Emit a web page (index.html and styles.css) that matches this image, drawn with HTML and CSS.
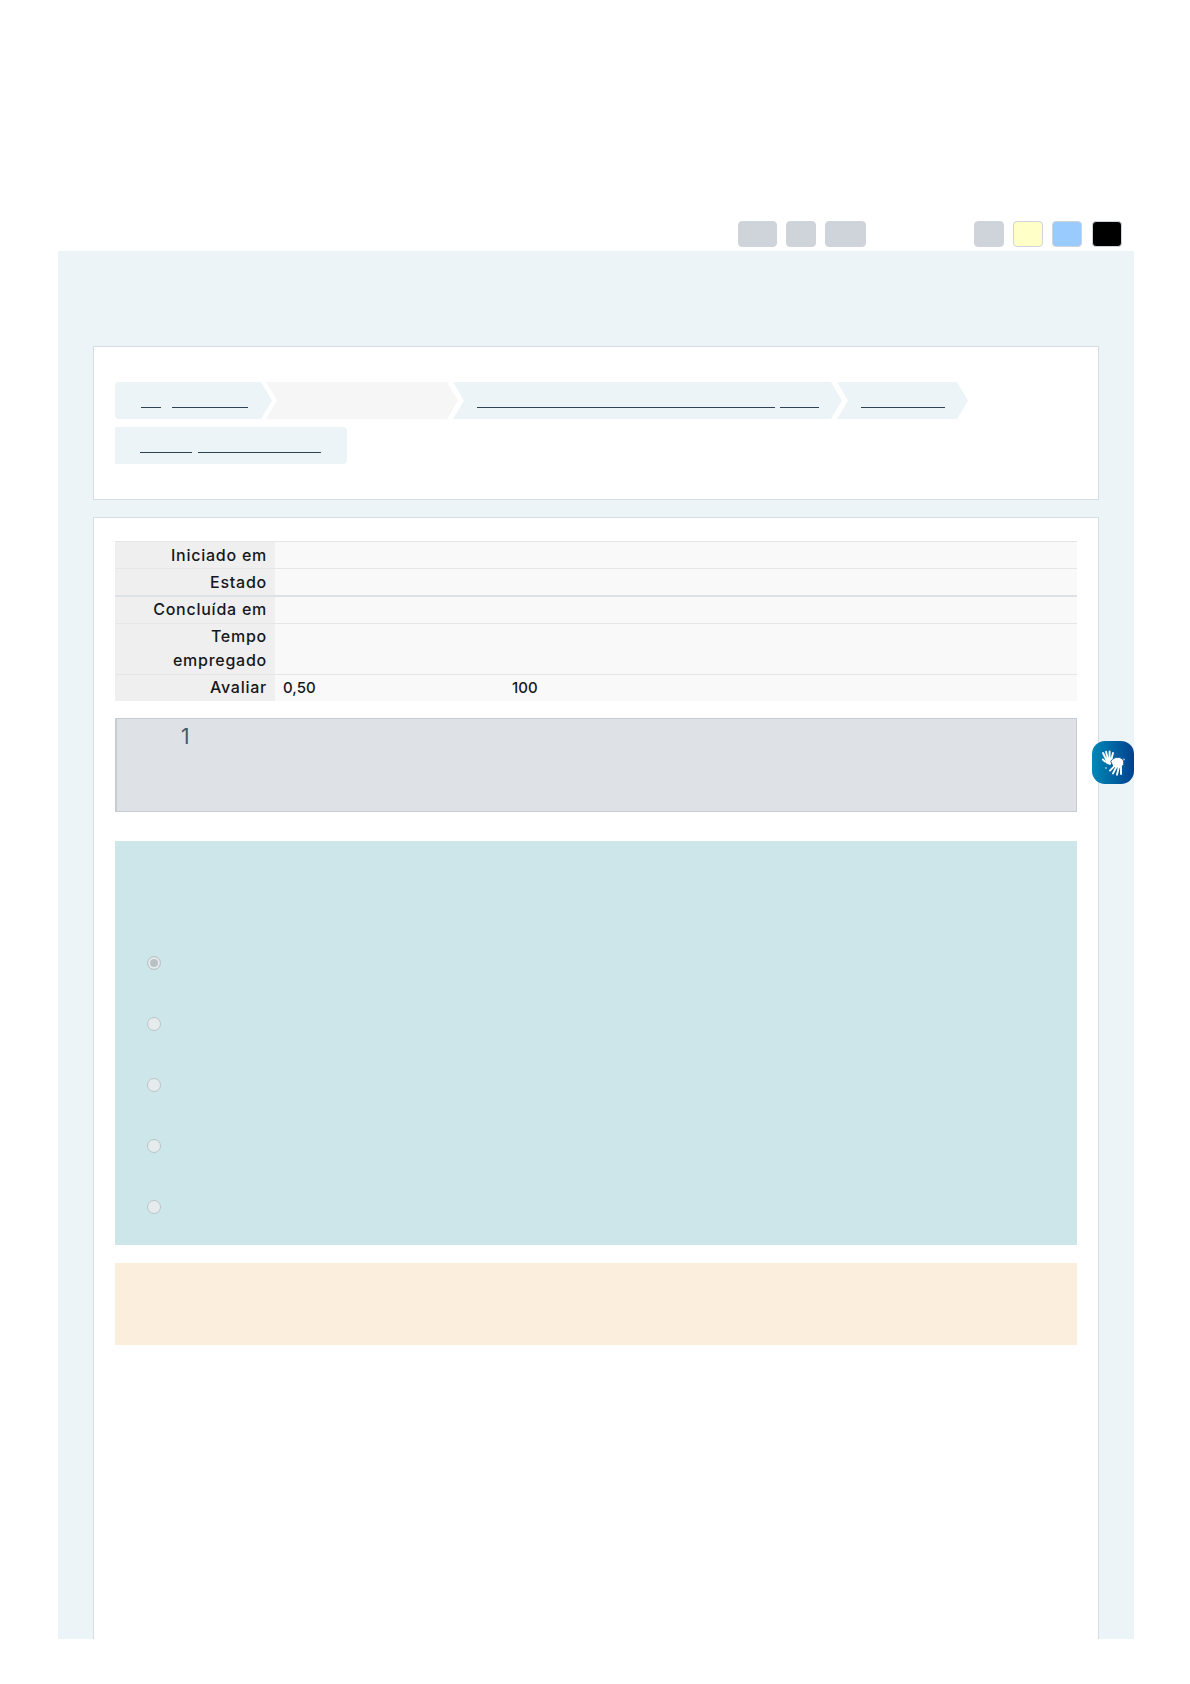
FILE: index.html
```html
<!DOCTYPE html>
<html lang="pt-BR">
<head>
<meta charset="utf-8">
<title>Revisão da tentativa</title>
<link rel="stylesheet" href="styles.css">
</head>
<body>
<header class="topbar">
  <div class="tools tools-size">
    <span class="tool tool-a"></span>
    <span class="tool tool-b"></span>
    <span class="tool tool-c"></span>
  </div>
  <div class="tools tools-contrast">
    <span class="tool swatch swatch-grey"></span>
    <span class="tool swatch swatch-yellow"></span>
    <span class="tool swatch swatch-blue"></span>
    <span class="tool swatch swatch-black"></span>
  </div>
</header>
<main class="page">
  <nav class="card crumbs">
    <div class="crumb-row">
      <div class="crumb crumb-1"><i class="u u1"></i><i class="u u2"></i></div>
      <div class="crumb crumb-2"></div>
      <div class="crumb crumb-3"><i class="u u3"></i><i class="u u4"></i></div>
      <div class="crumb crumb-4"><i class="u u5"></i></div>
    </div>
    <div class="crumb-row">
      <div class="crumb crumb-5"><i class="u u6"></i><i class="u u7"></i></div>
    </div>
  </nav>
  <section class="card content">
    <table class="summary">
      <tr><th>Iniciado em</th><td></td></tr>
      <tr class="thick"><th>Estado</th><td></td></tr>
      <tr><th>Concluída em</th><td></td></tr>
      <tr><th>Tempo<br>empregado</th><td></td></tr>
      <tr><th>Avaliar</th><td><span class="grade">0,50</span><span>100</span></td></tr>
    </table>
    <div class="qinfo"><span class="qno">1</span></div>
    <div class="qbody">
      <span class="radio checked"></span>
      <span class="radio"></span>
      <span class="radio"></span>
      <span class="radio"></span>
      <span class="radio"></span>
    </div>
    <div class="feedback"></div>
  </section>
</main>
<a class="vlibras" aria-label="Acessibilidade em Libras">
  <svg viewBox="0 0 42 42" width="42" height="42">
    <g class="hand-fingers">
      <path d="M14 18 11 12M15.6 16.5 14 10.8M17.6 16.5V10.4M19.6 17.5 21 12"/>
      <path d="M13 20.5 10.8 18.5"/>
    </g>
    <path class="hand" d="M12.8 16.5h7.8l1 4.4-3.6 3-4-1.6z"/>
    <path class="hand hand-front" d="M18.8 20.5c2-4 7-5 10.2-3.4 2.4 1.2 3 3.4 2.6 6.6L28 27.4l-6.6-1z"/>
    <g class="hand-fingers">
      <path d="M22.4 25.2 18 29.6M24.4 26 21 32.4M26.8 26.4 25 33.8M29 25.8V33"/>
    </g>
    <circle class="dot" cx="14" cy="27" r="1"/>
    <circle class="dot" cx="32" cy="18.4" r="1"/>
  </svg>
</a>
</body>
</html>
```
FILE: styles.css
```css
* { box-sizing: border-box; }
html, body { margin: 0; padding: 0; background: #fff; }
body { font-family: Inter, "Open Sans", Arial, sans-serif; color: #14181c; height: 1684px; overflow: hidden; position: relative; }

.topbar { height: 251px; display: flex; align-items: flex-start; padding: 221px 0 0 738px; }
.tools { display: flex; gap: 9px; }
.tools-contrast { margin-left: 108px; gap: 9.2px; }
.tool { display: block; height: 26px; border-radius: 4px; background: #ced4da; border: 1px solid #ced4da; }
.tool-a { width: 39px; }
.tool-b { width: 30px; }
.tool-c { width: 41px; }
.swatch { width: 30px; }
.swatch-yellow { background: #ffffc8; }
.swatch-blue { background: #9acbff; }
.swatch-black { background: #000; }

.page { width: 1076px; height: 1388px; margin-left: 58px; padding: 95px 35px 0; background: #edf4f7; overflow: hidden; display: flex; flex-direction: column; gap: 17px; }
.card { background: #fff; border: 1px solid #d6dde2; }

.crumbs { height: 154px; padding: 35px 21px 0; display: flex; flex-direction: column; gap: 8px; flex: none; }
.crumb-row { display: flex; height: 37px; }
.crumb { height: 37px; position: relative; background: #edf4f7; }
.crumb-1 { width: 157px; border-radius: 4px 0 0 4px; clip-path: polygon(0 0, 146px 0, 100% 50%, 146px 100%, 0 100%); }
.crumb-2 { width: 192px; margin-left: -6px; background: #f6f6f6; clip-path: polygon(0 0, 181px 0, 100% 50%, 181px 100%, 0 100%, 11px 50%); }
.crumb-3 { width: 389px; margin-left: -5px; clip-path: polygon(0 0, 378px 0, 100% 50%, 378px 100%, 0 100%, 11px 50%); }
.crumb-4 { width: 131px; margin-left: -5px; clip-path: polygon(0 0, 120px 0, 100% 50%, 120px 100%, 0 100%, 11px 50%); }
.crumb-5 { width: 232px; border-radius: 0 4px 4px 0; }
.u { position: absolute; top: 25px; height: 1px; background: #2f4252; }
.u1 { left: 26px; width: 20px; }
.u2 { left: 57px; width: 76px; }
.u3 { left: 24px; width: 298px; }
.u4 { left: 327px; width: 39px; }
.u5 { left: 24px; width: 84px; }
.u6 { left: 25px; width: 52px; }
.u7 { left: 83px; width: 123px; }

.content { flex: 1; padding: 23px 21px 0; border-bottom: 0; }
.summary { width: 100%; border-collapse: collapse; table-layout: fixed; line-height: 24px; }
.summary tr { border-top: 1px solid #e4e7ea; }
.summary tr.thick + tr { border-top: 2px solid #dee2e6; }
.summary th { width: 160px; padding: 1px 8px 1px 0; background: #efefef; font-size: 16px; font-weight: 500; text-align: right; vertical-align: top; letter-spacing: .75px; }
.summary .thick ~ tr th { padding: 0 8px 2px 0; }
.summary td { padding: 1px 8px; background: #f9f9f9; font-size: 15px; font-weight: 500; vertical-align: top; }
.grade { display: inline-block; width: 229px; }

.qinfo { height: 94px; margin-top: 17px; background: #dee2e6; border: 1px solid #c6ccd2; border-left-width: 2px; padding: 4px 0 0 64px; }
.qno { font-size: 21px; line-height: 28px; color: #465867; }

.qbody { height: 404px; margin-top: 29px; background: #cde6ea; display: flex; flex-direction: column; align-items: flex-start; gap: 47px; padding: 114.5px 0 0 31.5px; }
.radio { display: block; flex: none; width: 14px; height: 14px; border-radius: 50%; background: #e6eced; border: 1.5px solid #bcc4c7; }
.radio.checked { background: #bac1c5; border: 1.5px solid #bcc4c7; box-shadow: inset 0 0 0 2px #e6eced; }

.feedback { height: 82px; margin-top: 18px; background: #fbeedc; }

.vlibras { position: absolute; left: 1092px; top: 741px; width: 42px; height: 43px; border-radius: 13px; background: linear-gradient(90deg, #0088b6, #00418f); display: block; }
.vlibras svg { display: block; }
.hand { fill: #fff; }
.hand-front { stroke: #0a62a3; stroke-width: 1; }
.hand-fingers path { fill: none; stroke: #fff; stroke-width: 1.9; stroke-linecap: round; }
.dot { fill: #8fbbd8; }
```
